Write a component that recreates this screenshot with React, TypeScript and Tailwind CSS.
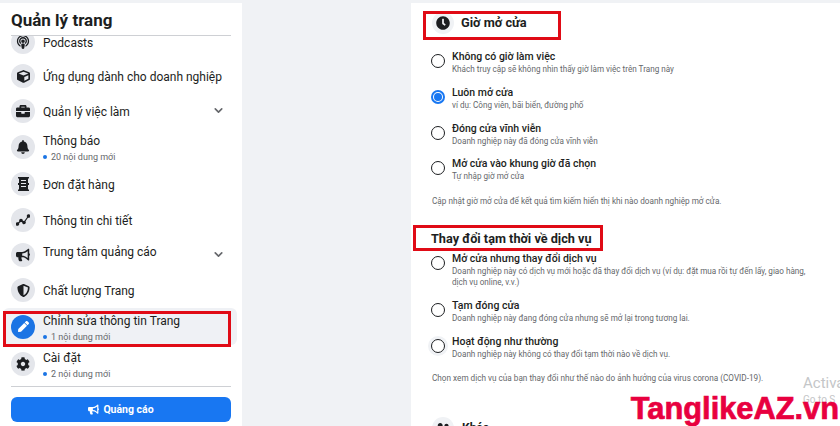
import { ReactNode } from "react";
import {
  FaBell,
  FaBriefcase,
  FaBullhorn,
  FaClock,
  FaCog,
  FaCube,
  FaPen,
  FaPodcast,
  FaShieldAlt,
  FaUserFriends,
} from "react-icons/fa";
import { FiChevronDown } from "react-icons/fi";

function OrdersIcon() {
  return (
    <svg width="13" height="14" viewBox="0 0 13 14" fill="#1c1e21">
      <path d="M1 0h11v1.5h-1V6h1v2h-1v4.5h1V14H1v-1.5h1V8H1V6h1V1.5H1z" />
      <path d="M4 3h5v1H4zM4 6h5v1H4zM4 9h5v1H4z" fill="#e4e6eb" />
    </svg>
  );
}

function InsightsIcon() {
  return (
    <svg width="14" height="12" viewBox="0 0 14 12" fill="none" stroke="#1c1e21" strokeWidth="1.2">
      <path d="M1.5 10 5 6.5 8 8.5 12.5 2" />
      <circle cx="1.5" cy="10" r="1.2" fill="#1c1e21" />
      <circle cx="5" cy="6.5" r="1.2" fill="#1c1e21" />
      <circle cx="8" cy="8.5" r="1.2" fill="#1c1e21" />
      <circle cx="12.5" cy="2" r="1.2" fill="#1c1e21" />
    </svg>
  );
}

type Item = {
  icon: ReactNode;
  title: string;
  badge?: string;
  chevron?: boolean;
  height: string;
  active?: boolean;
  lift?: boolean;
};

const items: Item[] = [
  { icon: <FaPodcast size={14} />, title: "Podcasts", height: "h-[35px]" },
  { icon: <FaCube size={13} />, title: "Ứng dụng dành cho doanh nghiệp", height: "h-[34px]" },
  { icon: <FaBriefcase size={14} />, title: "Quản lý việc làm", chevron: true, height: "h-[35px]" },
  { icon: <FaBell size={14} />, title: "Thông báo", badge: "20 nội dung mới", height: "h-[37px]" },
  { icon: <OrdersIcon />, title: "Đơn đặt hàng", height: "h-[37px]" },
  { icon: <InsightsIcon />, title: "Thông tin chi tiết", height: "h-[35px]" },
  { icon: <FaBullhorn size={14} />, title: "Trung tâm quảng cáo", chevron: true, height: "h-[35px]", lift: true },
  { icon: <FaShieldAlt size={13} />, title: "Chất lượng Trang", height: "h-[36px]" },
  { icon: <FaPen size={11} />, title: "Chỉnh sửa thông tin Trang", badge: "1 nội dung mới", height: "h-[37px]", active: true },
  { icon: <FaCog size={14} />, title: "Cài đặt", badge: "2 nội dung mới", height: "h-[37px]" },
];

function SideRow({ item }: { item: Item }) {
  return (
    <div
      className={`${item.height} flex items-center gap-[8px] pl-[8px] pr-[12px] shrink-0 rounded-md ${
        item.active ? "bg-[#eff1f5]" : ""
      }`}
    >
      <div
        className={`w-[24px] h-[24px] rounded-full flex items-center justify-center shrink-0 ${
          item.active ? "bg-[#1b74e4] text-white" : "bg-[#e4e6eb] text-[#1c1e21]"
        }`}
      >
        {item.icon}
      </div>
      <div className={`flex-1 min-w-0 ${item.lift ? "-mt-[5px]" : "pt-[3px]"}`}>
        <div className="text-[12px] leading-[15px] text-[#1c1e21] whitespace-nowrap">{item.title}</div>
        {item.badge && (
          <div className="flex items-center gap-[4px] text-[9px] leading-[12px] text-[#65676b] mt-[2px]">
            <span className="w-[4px] h-[4px] rounded-full bg-[#1b74e4]" />
            {item.badge}
          </div>
        )}
      </div>
      {item.chevron && <FiChevronDown size={13} strokeWidth={3} className="text-[#65676b]" />}
    </div>
  );
}

function Sidebar() {
  return (
    <aside className="w-[242px] shrink-0 bg-white flex flex-col h-[423px]">
      <div className="mx-[11px] h-[33px] shrink-0 border-b border-[#ced0d4] flex items-center pt-[4px] text-[17px] font-bold text-[#1c1e21] relative z-10">
        Quản lý trang
      </div>
      <div className="overflow-hidden h-[348px] shrink-0 mx-[3px] w-[234px]">
        <div className="-mt-[12px]">
          {items.map((item) => (
            <SideRow item={item} key={item.title} />
          ))}
        </div>
      </div>
      <div className="mx-[11px] border-t border-[#ced0d4] mt-[2px] pt-[10px]">
        <button className="w-full h-[25px] rounded-md bg-[#1877f2] text-white text-[10.5px] font-bold flex items-center justify-center gap-[4px]">
          <FaBullhorn size={11} />
          Quảng cáo
        </button>
      </div>
    </aside>
  );
}

type Option = { title: string; sub: string; checked?: boolean; height: string; hover?: boolean };

const hours: Option[] = [
  { title: "Không có giờ làm việc", sub: "Khách truy cập sẽ không nhìn thấy giờ làm việc trên Trang này", height: "h-[36px]" },
  { title: "Luôn mở cửa", sub: "ví dụ: Công viên, bãi biển, đường phố", checked: true, height: "h-[36px]" },
  { title: "Đóng cửa vĩnh viễn", sub: "Doanh nghiệp này đã đóng cửa vĩnh viễn", height: "h-[35px]" },
  { title: "Mở cửa vào khung giờ đã chọn", sub: "Tự nhập giờ mở cửa", height: "h-[35px]" },
];

const services: Option[] = [
  {
    title: "Mở cửa nhưng thay đổi dịch vụ",
    sub: "Doanh nghiệp này có dịch vụ mới hoặc đã thay đổi dịch vụ (ví dụ: đặt mua rồi tự đến lấy, giao hàng, dịch vụ online, v.v.)",
    height: "h-[47px]",
  },
  { title: "Tạm đóng cửa", sub: "Doanh nghiệp này đang đóng cửa nhưng sẽ mở lại trong tương lai.", height: "h-[36px]" },
  { title: "Hoạt động như thường", sub: "Doanh nghiệp này không có thay đổi tạm thời nào về dịch vụ.", height: "h-[36px]", hover: true },
];

function OptionRow({ option }: { option: Option }) {
  return (
    <div className={`${option.height} flex gap-[4px] shrink-0`}>
      <div className={`w-[20px] h-[20px] mt-[2px] rounded-full flex items-center justify-center shrink-0 ${option.hover ? "bg-[#f0f2f5]" : ""}`}>
        {option.checked ? (
          <span className="w-[14px] h-[14px] rounded-full border-[2px] border-[#1877f2] flex items-center justify-center">
            <span className="w-[8px] h-[8px] rounded-full bg-[#1877f2]" />
          </span>
        ) : (
          <span className="w-[14px] h-[14px] rounded-full border-[1.5px] border-[#1c1e21] bg-white" />
        )}
      </div>
      <div className="w-[358px]">
        <div className="text-[10.5px] leading-[14px] font-medium text-[#1c1e21] mt-[1px]">{option.title}</div>
        <div className="text-[8.15px] leading-[11px] text-[#65676b]">{option.sub}</div>
      </div>
    </div>
  );
}

function Details() {
  return (
    <main className="w-[429px] shrink-0 bg-white h-[423px] overflow-hidden pl-[17px]">
      <div className="flex items-center gap-[7px] h-[24px] mt-[8px] ml-[4px]">
        <div className="w-[22px] h-[22px] rounded-full bg-[#f0f2f5] flex items-center justify-center">
          <FaClock size={14} className="text-[#1c1e21]" />
        </div>
        <h2 className="text-[12.8px] font-bold text-[#1c1e21]">Giờ mở cửa</h2>
      </div>
      <div className="mt-[14px] flex flex-col">
        {hours.map((option) => (
          <OptionRow option={option} key={option.title} />
        ))}
      </div>
      <p className="text-[8.2px] leading-[11px] text-[#65676b] mt-[5px] ml-[4px]">
        Cập nhật giờ mở cửa để kết quả tìm kiếm hiển thị khi nào doanh nghiệp mở cửa.
      </p>
      <h2 className="text-[12.7px] leading-[16px] font-bold text-[#1c1e21] mt-[24px] ml-[3px]">
        Thay đổi tạm thời về dịch vụ
      </h2>
      <div className="mt-[4px] flex flex-col">
        {services.map((option) => (
          <OptionRow option={option} key={option.title} />
        ))}
      </div>
      <p className="text-[8.2px] leading-[11px] text-[#65676b] mt-[3px] ml-[4px]">
        Chọn xem dịch vụ của bạn thay đổi như thế nào do ảnh hưởng của virus corona (COVID-19).
      </p>
      <div className="flex items-center gap-[8px] mt-[33px] ml-[4px]">
        <div className="w-[22px] h-[22px] rounded-full bg-[#f0f2f5] flex items-center justify-center">
          <FaUserFriends size={14} className="text-[#1c1e21]" />
        </div>
        <span className="text-[12px] font-bold text-[#1c1e21]">Khác</span>
      </div>
    </main>
  );
}

export default function App() {
  return (
    <div className="relative w-[840px] h-[426px] overflow-hidden bg-[#f0f2f5] pt-[3px] font-['Roboto',sans-serif]">
      <div className="flex justify-between">
        <Sidebar />
        <Details />
      </div>

      {/* annotation boxes drawn over the screenshot */}
      <div className="absolute left-[3px] top-[311px] w-[228px] h-[36px] border-[3px] border-[#e00b16]" />
      <div className="absolute left-[423px] top-[11px] w-[138px] h-[29px] border-[3px] border-[#e00b16]" />
      <div className="absolute left-[413px] top-[225px] w-[190px] h-[26px] border-[3px] border-[#e00b16]" />

      <div className="absolute left-[803px] top-[373px] text-[15px] leading-[20px] text-[#c4c6c8] whitespace-nowrap">Activa</div>
      <div className="absolute left-[803px] top-[393px] text-[10px] leading-[14px] text-[#c4c6c8] whitespace-nowrap">Go to S</div>
      <div className="absolute right-[1px] top-[392px] text-[30.8px] leading-[34px] font-black text-[#e8003f] whitespace-nowrap font-['Liberation_Sans',sans-serif] [-webkit-text-stroke:0.7px_#e8003f]">
        TanglikeAZ.vn
      </div>
    </div>
  );
}
